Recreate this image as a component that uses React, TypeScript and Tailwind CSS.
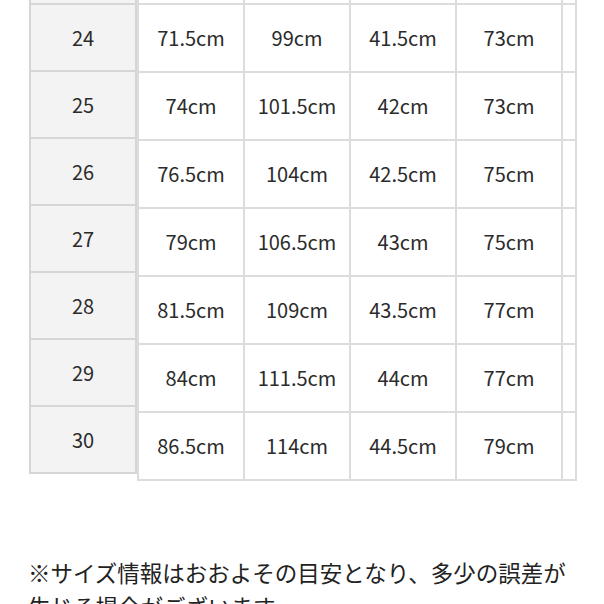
import React from 'react';

const sizes = ['24', '25', '26', '27', '28', '29', '30'];

const rows: string[][] = [
  ['71.5cm', '99cm', '41.5cm', '73cm'],
  ['74cm', '101.5cm', '42cm', '73cm'],
  ['76.5cm', '104cm', '42.5cm', '75cm'],
  ['79cm', '106.5cm', '43cm', '75cm'],
  ['81.5cm', '109cm', '43.5cm', '77cm'],
  ['84cm', '111.5cm', '44cm', '77cm'],
  ['86.5cm', '114cm', '44.5cm', '79cm'],
];

const font = { fontFamily: '"Noto Sans CJK JP", "Noto Sans", sans-serif' };

const App: React.FC = () => {
  return (
    <div className="w-[604px] h-[604px] overflow-hidden bg-white text-[#2b2b2b]" style={font}>
      <div className="flex items-start pl-[29px]">
        {/* Size column */}
        <div className="w-[108px] -mt-[62px] border-l-2 border-[#d6d6d6]">
          <div className="h-[67px] bg-[#f3f3f3] border-r-2 border-b-2 border-[#d6d6d6]" />
          {sizes.map((s) => (
            <div
              key={s}
              className="h-[67px] bg-[#f3f3f3] border-r-2 border-b-2 border-[#d6d6d6] flex items-center justify-center text-[20px]"
            >
              {s}
            </div>
          ))}
        </div>

        {/* Measurement table */}
        <div className="-mt-[63px] border-l-2 border-[#dcdcdc]">
          {[['', '', '', ''], ...rows].map((r, i) => (
            <div key={i} className="flex h-[68px]">
              {r.map((v, j) => (
                <div
                  key={j}
                  className="w-[106px] border-r-2 border-b-2 border-[#dcdcdc] flex items-center justify-center text-[20px]"
                >
                  {v}
                </div>
              ))}
              <div className="w-[14px] border-r-2 border-b-2 border-[#dcdcdc]" />
            </div>
          ))}
        </div>
      </div>

      <p className="mt-[74px] pl-[28px] text-[22.5px] leading-[34px] text-[#222] whitespace-nowrap">
        ※サイズ情報はおおよその目安となり、多少の誤差が
        <br />
        生じる場合がございます。
      </p>
    </div>
  );
};

export default App;
